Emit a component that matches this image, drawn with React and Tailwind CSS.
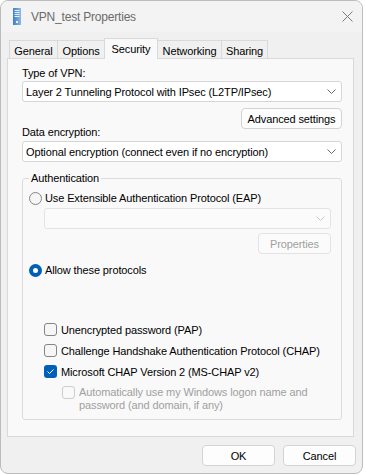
import React from "react";

const F = "font-['Liberation_Sans',Arial,sans-serif]";

function Chevron({ light }) {
  return (
    <svg width="9" height="5" viewBox="0 0 9 5" className="shrink-0">
      <path d="M0.5 0.5 L4.5 4.5 L8.5 0.5" fill="none" stroke={light ? "#c8c8c8" : "#6a6a6a"} strokeWidth="1" />
    </svg>
  );
}

function Select({ text, disabled, className = "" }) {
  return (
    <div
      className={`flex h-[21px] items-center justify-between rounded-[3px] border pl-[3px] pr-[5px] ${
        disabled ? "border-[#e3e3e3] bg-[#fbfbfb]" : "border-[#d6d6d6] bg-white"
      } ${className}`}
    >
      <span className="leading-[16px] whitespace-nowrap">{text}</span>
      <Chevron light={disabled} />
    </div>
  );
}

function Button({ children, disabled, className = "" }) {
  return (
    <div
      className={`flex h-[21px] items-center justify-center rounded-[4px] border ${
        disabled ? "border-[#e3e3e3] bg-[#fbfbfb] text-[#a0a0a0]" : "border-[#d3d3d3] bg-[#fdfdfd] text-black"
      } ${className}`}
    >
      <span className="leading-[16px] whitespace-nowrap">{children}</span>
    </div>
  );
}

function Radio({ checked }) {
  return checked ? (
    <span className="flex h-[13px] w-[13px] shrink-0 items-center justify-center rounded-full bg-[#005fb8]">
      <span className="h-[5px] w-[5px] rounded-full bg-white" />
    </span>
  ) : (
    <span className="h-[13px] w-[13px] shrink-0 rounded-full border border-[#858585] bg-[#f6f6f6]" />
  );
}

function Checkbox({ checked, disabled }) {
  if (checked)
    return (
      <span className="flex h-[13px] w-[13px] shrink-0 items-center justify-center rounded-[3px] bg-[#005fb8]">
        <svg width="13" height="13" viewBox="0 0 13 13">
          <path d="M3.5 6.5 L5.5 8.5 L9.5 4.5" fill="none" stroke="white" strokeWidth="1" />
        </svg>
      </span>
    );
  return (
    <span
      className={`h-[13px] w-[13px] shrink-0 rounded-[3px] border ${
        disabled ? "border-[#cdcdcd] bg-[#f9f9f9]" : "border-[#858585] bg-[#f6f6f6]"
      }`}
    />
  );
}

function Tab({ children, w, selected, first }) {
  if (selected)
    return (
      <div
        className={`relative z-10 -ml-px -mb-px flex h-[21px] justify-center border-x border-t border-[#d9d9d9] bg-[#f9f9f9] pt-[2px] ${w}`}
      >
        <span className="leading-[16px]">{children}</span>
      </div>
    );
  return (
    <div
      className={`flex h-[18px] justify-center border-x border-t border-[#d9d9d9] bg-[#f0f0f0] pt-[2px] ${first ? "" : "-ml-px"} ${w}`}
    >
      <span className="leading-[16px]">{children}</span>
    </div>
  );
}

function CheckRow({ checked, children }) {
  return (
    <div className="flex h-[21px] items-center gap-[4px] pl-[15px]">
      <Checkbox checked={checked} />
      <span className="leading-[16px] whitespace-nowrap">{children}</span>
    </div>
  );
}

export default function App() {
  return (
    <div className={`h-[475px] w-[366px] bg-white text-[11px] tracking-[-0.12px] text-black ${F}`}>
      <div className="flex h-[474px] w-[363px] flex-col overflow-hidden rounded-[8px] border border-[#bcbcbc] bg-[#f0f0f0]">
        {/* Title bar */}
        <div className="flex h-[31px] shrink-0 items-center bg-[#f3f3f3] pl-[12px]">
          <svg width="8" height="17" viewBox="0 0 8 17" className="shrink-0">
            <defs>
              <linearGradient id="ig" x1="0" y1="0" x2="1" y2="0">
                <stop offset="0" stopColor="#3f7fc4" />
                <stop offset="1" stopColor="#8fb7e3" />
              </linearGradient>
            </defs>
            <rect x="0" y="0" width="8" height="17" rx="0.5" fill="url(#ig)" />
            <rect x="1.5" y="2" width="5" height="1" fill="#e6f0fb" />
            <rect x="1.5" y="4" width="5" height="1" fill="#e6f0fb" />
            <rect x="1.5" y="6" width="5" height="1" fill="#e6f0fb" />
            <rect x="1.5" y="8" width="5" height="1" fill="#e6f0fb" />
            <rect x="3" y="13" width="2" height="2" fill="#e6f0fb" />
          </svg>
          <span className="ml-[10px] text-[12px] leading-[16px] tracking-[-0.2px] text-[#6b6b6b]">VPN_test Properties</span>
          <svg width="11" height="11" viewBox="0 0 11 11" className="ml-auto mr-[9px] shrink-0">
            <path d="M0.5 0.5 L10.5 10.5 M10.5 0.5 L0.5 10.5" stroke="#7a7a7a" strokeWidth="1" />
          </svg>
        </div>

        {/* Tabs */}
        <div className="mt-[6px] flex h-[20px] items-end pl-[8px]">
          <Tab first w="w-[49px]">General</Tab>
          <Tab w="w-[48px]">Options</Tab>
          <Tab selected w="w-[54px]">Security</Tab>
          <Tab w="w-[65px]">Networking</Tab>
          <Tab w="w-[47px]">Sharing</Tab>
        </div>

        {/* Panel */}
        <div className="ml-[6px] flex h-[379px] w-[347px] flex-col border border-[#d9d9d9] bg-[#f9f9f9] pl-[14px] pr-[11px]">
          <div className="mt-[6px] leading-[16px]">Type of VPN:</div>
          <Select text="Layer 2 Tunneling Protocol with IPsec (L2TP/IPsec)" />
          <div className="flex h-[39px] justify-between">
            <div className="self-end pb-[1px] leading-[16px]">Data encryption:</div>
            <Button className="mt-[6px] w-[101px]">Advanced settings</Button>
          </div>
          <Select text="Optional encryption (connect even if no encryption)" />

          <fieldset className="mt-[9px] rounded-[3px] border border-[#dcdcdc]">
            <legend className="ml-[6px] px-[2px] leading-[14px]">Authentication</legend>
            <div className="flex flex-col pb-[7px] pl-[6px] pr-[10px]">
              <div className="mt-[5px] flex h-[16px] items-center gap-[3px]">
                <Radio />
                <span className="leading-[16px]">Use Extensible Authentication Protocol (EAP)</span>
              </div>
              <Select disabled text="" className="ml-[15px] mt-[2px]" />
              <Button disabled className="mt-[4px] w-[73px] self-end">Properties</Button>
              <div className="mt-[8px] flex h-[16px] items-center gap-[3px]">
                <Radio checked />
                <span className="leading-[16px]">Allow these protocols</span>
              </div>
              <div className="mt-[41px] flex flex-col">
                <CheckRow>Unencrypted password (PAP)</CheckRow>
                <CheckRow>Challenge Handshake Authentication Protocol (CHAP)</CheckRow>
                <CheckRow checked>Microsoft CHAP Version 2 (MS-CHAP v2)</CheckRow>
                <div className="flex items-start gap-[4px] pl-[33px] pt-[4px] text-[#a0a0a0]">
                  <Checkbox disabled />
                  <span className="leading-[13px]">
                    Automatically use my Windows logon name and
                    <br />
                    password (and domain, if any)
                  </span>
                </div>
              </div>
            </div>
          </fieldset>
        </div>

        {/* Bottom buttons */}
        <div className="mt-[8px] flex justify-end gap-[8px] pr-[6px]">
          <Button className="w-[73px]">OK</Button>
          <Button className="w-[73px]">Cancel</Button>
        </div>
      </div>
    </div>
  );
}
